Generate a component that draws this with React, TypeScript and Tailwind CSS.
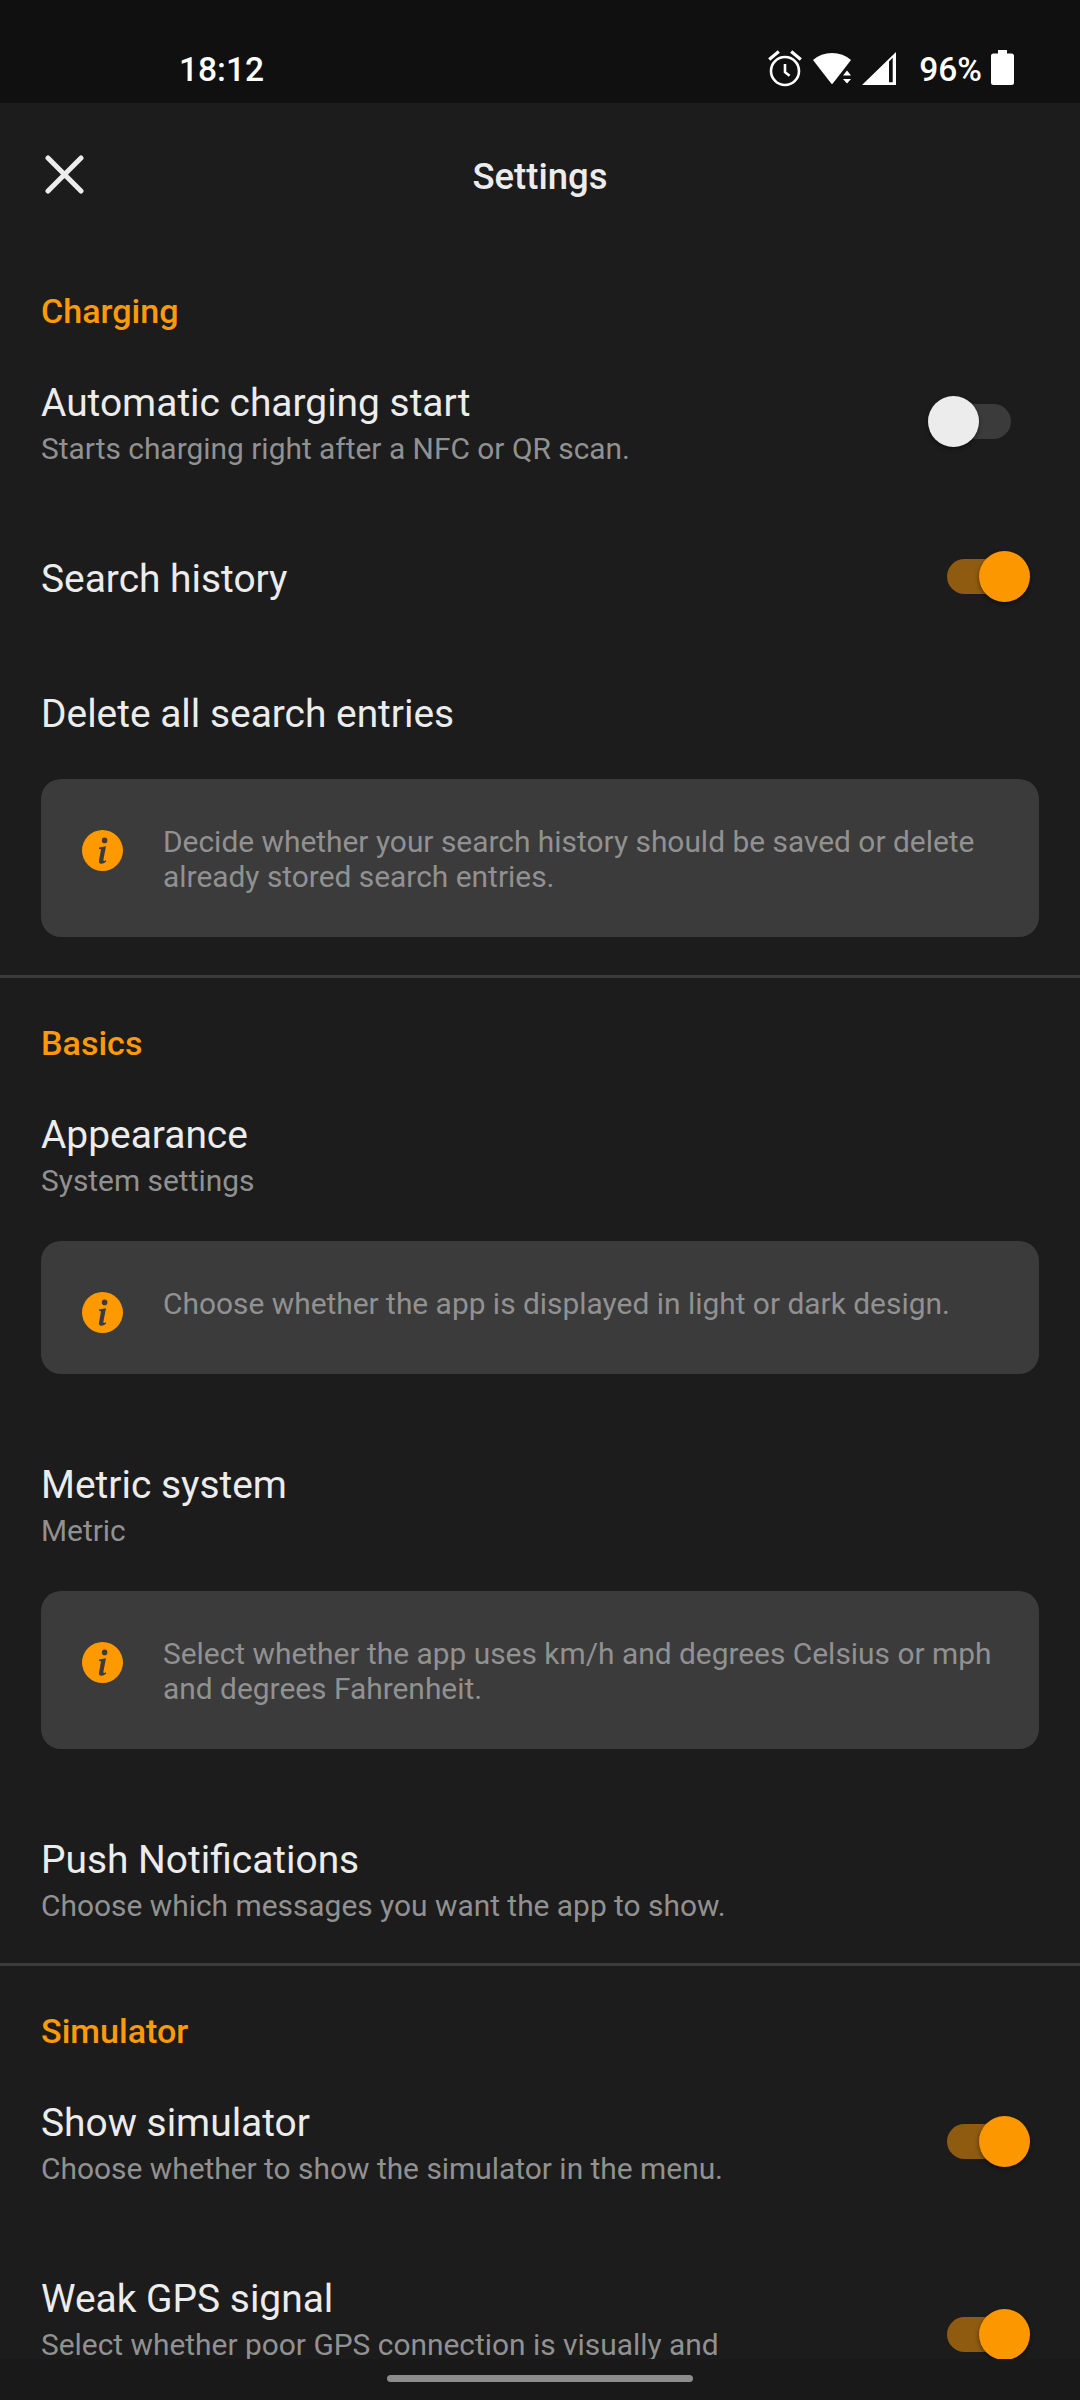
import React from "react";

function Title({ children }: { children: React.ReactNode }) {
  return <div className="text-[38.9px] leading-[46px] text-[#ececec] whitespace-nowrap">{children}</div>;
}
function Sub({ children }: { children: React.ReactNode }) {
  return <div className="text-[29.9px] leading-[35px] text-[#919191] whitespace-nowrap">{children}</div>;
}
function Section({ children }: { children: React.ReactNode }) {
  return <h2 className="text-[34.1px] leading-[40px] font-medium text-[#fd9a08]">{children}</h2>;
}

function TitleSub({ title, sub }: { title: string; sub: string }) {
  return (
    <div className="flex flex-1 flex-col gap-[5px]">
      <Title>{title}</Title>
      <Sub>{sub}</Sub>
    </div>
  );
}

function Switch({ on }: { on: boolean }) {
  return on ? (
    <span className="relative block w-[83px] h-[51px] mr-[9px] shrink-0">
      <span className="absolute left-0 top-2 w-[72px] h-[35px] rounded-full bg-[#8e5b10]" />
      <span className="absolute right-0 top-0 size-[51px] rounded-full bg-[#fc9700] shadow-[0_2px_4px_rgba(0,0,0,0.45)]" />
    </span>
  ) : (
    <span className="relative block w-[83px] h-[51px] mr-7 shrink-0">
      <span className="absolute right-0 top-2 w-[72px] h-[35px] rounded-full bg-[#3b3b3b]" />
      <span className="absolute left-0 top-0 size-[51px] rounded-full bg-[#ececec] shadow-[0_2px_4px_rgba(0,0,0,0.45)]" />
    </span>
  );
}

function Info({ lines, tall }: { lines: string[]; tall?: boolean }) {
  return (
    <div className={`flex items-start rounded-[20px] bg-[#3b3b3b] pl-[41px] ${tall ? "h-[158px]" : "h-[133px]"}`}>
      <svg className="mt-[51px] size-[41px] shrink-0" viewBox="0 0 41 41">
        <circle cx="20.5" cy="20.5" r="20.5" fill="#ff9900" />
        <circle cx="22.6" cy="10.4" r="2.8" fill="#3b3b3b" />
        <path d="M17 17.4 L24 16.2 L21.4 29.6 Q21.1 31.2 22.3 31 L24 30.2 L24.2 31.4 Q21.8 33.9 19 33.7 Q16.6 33.5 17 30.8 L19 19.3 L17 18.9 Z" fill="#3b3b3b" />
      </svg>
      <div className="ml-[40px] mt-[45px]">
        {lines.map((l) => (
          <Sub key={l}>{l}</Sub>
        ))}
      </div>
    </div>
  );
}

export default function App() {
  return (
    <div className="w-[1080px] h-[2400px] overflow-hidden flex flex-col bg-[#1c1c1c] font-['Roboto',sans-serif]">
      <div className="h-[103px] shrink-0 bg-[#101010] flex items-start text-white font-medium text-[33.5px] leading-[40px]">
        <span className="ml-[179px] mt-[50px]">18:12</span>
        <div className="ml-auto mr-[66px] flex items-start">
          <svg className="mt-[50px] w-[34px] h-[37px]" viewBox="0 0 34 37" fill="none" stroke="#fff">
            <circle cx="17" cy="21" r="14" strokeWidth="2.6" />
            <path d="M17 14v8.2l4.6 3.6" strokeWidth="2.6" />
            <path d="M1.2 9.4l9.6-7.8M32.8 9.4l-9.6-7.8" strokeWidth="3.2" />
          </svg>
          <svg className="ml-[11px] mt-[52px] w-[38px] h-[33px]" viewBox="0 0 38 33" fill="#fff">
            <path d="M0 8Q8 1 19 1T38 8L20 31.3Q19 32.5 18 31.3Z" />
            <path d="M34 18.5L38 23.5H30ZM30 27H38L34 31.5Z" />
          </svg>
          <svg className="ml-[11px] mt-[52px] w-[34px] h-[33px]" viewBox="0 0 34 33">
            <path fillRule="evenodd" fill="#fff" d="M34 0V33H0ZM27 9.5V30.2h3.7V5.7Z" />
          </svg>
          <span className="ml-[23px] mt-[50px]">96%</span>
          <svg className="ml-[9px] mt-[50px] w-[23px] h-[35px]" viewBox="0 0 23 35" fill="#fff">
            <path d="M7 0h9v3.5h4.5Q23 3.5 23 6v26.5Q23 35 20.5 35h-18Q0 35 0 32.5V6Q0 3.5 2.5 3.5H7Z" />
          </svg>
        </div>
      </div>

      <main className="h-[2256px] shrink-0 overflow-hidden flex flex-col">
        <header className="relative h-[146px] shrink-0 flex justify-center pt-[53px]">
          <svg className="absolute left-[45px] top-[52px] size-[39px]" viewBox="0 0 39 39" stroke="#ececec" strokeWidth="5" strokeLinecap="round">
            <path d="M3 3L36 36M36 3L3 36" />
          </svg>
          <h1 className="text-[36.5px] leading-[42px] font-medium text-[#ececec]">Settings</h1>
        </header>

        <section className="h-[729px] shrink-0 px-[41px] pt-[42px] border-b-[3px] border-[#3b3b3b]">
          <Section>Charging</Section>
          <div className="mt-[49px] flex">
            <TitleSub title="Automatic charging start" sub="Starts charging right after a NFC or QR scan." />
            <div className="mt-4"><Switch on={false} /></div>
          </div>
          <div className="mt-[85px] flex items-end justify-between">
            <Title>Search history</Title>
            <Switch on />
          </div>
          <div className="mt-[89px]"><Title>Delete all search entries</Title></div>
          <div className="mt-[42px]">
            <Info tall lines={["Decide whether your search history should be saved or delete", "already stored search entries."]} />
          </div>
        </section>

        <section className="h-[988px] shrink-0 px-[41px] pt-[45px] border-b-[3px] border-[#3b3b3b]">
          <Section>Basics</Section>
          <div className="mt-[49px]"><TitleSub title="Appearance" sub="System settings" /></div>
          <div className="mt-[43px]"><Info lines={["Choose whether the app is displayed in light or dark design."]} /></div>
          <div className="mt-[88px]"><TitleSub title="Metric system" sub="Metric" /></div>
          <div className="mt-[43px]"><Info tall lines={["Select whether the app uses km/h and degrees Celsius or mph", "and degrees Fahrenheit."]} /></div>
          <div className="mt-[88px]"><TitleSub title="Push Notifications" sub="Choose which messages you want the app to show." /></div>
        </section>

        <section className="shrink-0 px-[41px] pt-[45px]">
          <Section>Simulator</Section>
          <div className="mt-[49px] flex">
            <TitleSub title="Show simulator" sub="Choose whether to show the simulator in the menu." />
            <div className="mt-4"><Switch on /></div>
          </div>
          <div className="mt-[90px] flex">
            <TitleSub title="Weak GPS signal" sub="Select whether poor GPS connection is visually and" />
            <div className="mt-[33px]"><Switch on /></div>
          </div>
        </section>
      </main>

      <footer className="h-[41px] shrink-0 bg-[#191919] flex justify-center pt-4">
        <div className="w-[306px] h-[7px] rounded-full bg-[#8c8c8c]" />
      </footer>
    </div>
  );
}
